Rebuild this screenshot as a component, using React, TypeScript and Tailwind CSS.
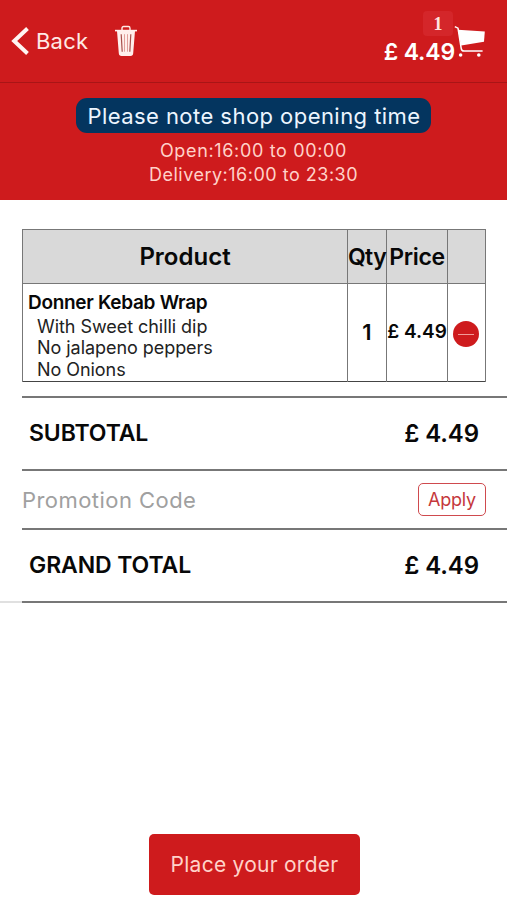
const order = {
  items: [
    {
      name: "Donner Kebab Wrap",
      options: ["With Sweet chilli dip", "No jalapeno peppers", "No Onions"],
      qty: 1,
      price: "£ 4.49",
    },
  ],
  total: "£ 4.49",
};

function BackIcon() {
  return (
    <svg width="18" height="28" viewBox="0 0 18 28" fill="none" stroke="#fff5f2" strokeWidth="4">
      <path d="M16.5 1.5 3.2 14l13.3 12.5" />
    </svg>
  );
}

function TrashIcon() {
  return (
    <svg width="24" height="32" viewBox="0 0 24 32" fill="none">
      <path d="M8 5V3.2Q8 1.5 9.7 1.5h4.6Q16 1.5 16 3.2V5" stroke="#ffe9e5" strokeWidth="1.4" />
      <path d="M1 4.8h22v1.6H1z" fill="#fff1ee" />
      <path d="M3 6h18l-1.8 22.3q-.2 2.7-2.7 2.7h-9q-2.5 0-2.7-2.7z" fill="#ffefec" />
      <path d="m7.2 9.2 1 17.5M16.8 9.2l-1 17.5" stroke="#a8504c" strokeWidth="1.2" />
      <path d="M10.5 9.2v17.5M13.5 9.2v17.5" stroke="#e0a09b" strokeWidth="1" />
    </svg>
  );
}

function CartIcon() {
  return (
    <svg width="32" height="32" viewBox="0 0 32 32" fill="none">
      <path d="M.8 1.6 4 3.2 7.2 23.3Q7.5 26 10 26h18.6" stroke="#fff" strokeWidth="1.5" />
      <path d="M4 4.8 30.8 6.4 30 16.8 7.2 20.6z" fill="#fff" />
      <circle cx="6.6" cy="30" r="1.8" fill="#fff" />
      <circle cx="24.8" cy="30" r="1.8" fill="#fff" />
    </svg>
  );
}

function Header() {
  return (
    <header className="flex h-[83px] shrink-0 items-start justify-between border-b border-[#a91516]">
      <div className="flex items-start pl-[11px] pt-[25px] text-[#ffe9e5]">
        <button className="flex h-8 items-center gap-[7px]">
          <BackIcon />
          <span className="text-[22px] leading-8 tracking-[0.2px]">Back</span>
        </button>
        <button className="ml-[26px]" aria-label="Empty basket">
          <TrashIcon />
        </button>
      </div>
      <div className="flex pr-[21px] pt-[11px] text-white">
        <div className="flex flex-col items-end">
          <span className="mr-px flex h-[25px] w-[30px] items-center justify-center rounded-sm bg-[#d4262a] pt-0.5 font-['Liberation_Serif',serif] text-[18px] font-bold text-[#ffe5e0]">
            1
          </span>
          <span className="-mr-px text-[23px] font-semibold leading-8 tracking-[-0.15px]">{order.total}</span>
        </div>
        <div className="mt-[14px]">
          <CartIcon />
        </div>
      </div>
    </header>
  );
}

function OpeningTimes() {
  return (
    <section className="flex h-[117px] shrink-0 flex-col items-center pt-[15px] text-[#ffd2c9]">
      <h1 className="flex h-[35px] w-[355px] items-center justify-center rounded-[11px] bg-[#04355f] pl-px pt-px text-[22px] tracking-[0.45px] text-[#edf6ff]">
        Please note shop opening time
      </h1>
      <p className="mt-[6px] text-[18px] leading-6 tracking-[0.65px]">Open:16:00 to 00:00</p>
      <p className="text-[18px] leading-6 tracking-[0.5px]">Delivery:16:00 to 23:30</p>
    </section>
  );
}

function BasketTable() {
  return (
    <table className="ml-[22px] mt-[29px] w-[464px] table-fixed border-collapse border border-[#444]">
      <colgroup>
        <col className="w-[325px]" />
        <col className="w-[39px]" />
        <col className="w-[61px]" />
        <col />
      </colgroup>
      <thead>
        <tr className="h-[54px] bg-[#d9d9d9] text-[24px] [&>th]:border [&>th]:border-[#777] [&>th]:p-0 [&>th]:font-semibold">
          <th>Product</th>
          <th><span className="-mx-1 text-[23px] tracking-[-0.6px]">Qty</span></th>
          <th><span className="-mx-1 text-[23px] tracking-[-0.3px]">Price</span></th>
          <th></th>
        </tr>
      </thead>
      <tbody>
        {order.items.map((item) => (
          <tr key={item.name} className="h-[98px] [&>td]:border-x [&>td]:border-[#777] [&>td]:p-0">
            <td>
              <div className="pl-[5px] pt-[5px]">
                <p className="text-[19px] font-semibold leading-[26px] tracking-[-0.3px]">{item.name}</p>
                <ul className="pl-[9px] text-[18px] leading-[21.5px] tracking-[-0.05px] text-[#222]">
                  {item.options.map((option) => (
                    <li key={option}>{option}</li>
                  ))}
                </ul>
              </div>
            </td>
            <td className="text-center text-[22px] font-semibold">{item.qty}</td>
            <td className="text-center text-[19px] font-semibold whitespace-nowrap">{item.price}</td>
            <td>
              <button className="ml-[5px] mt-[3px] flex size-[26px] items-center justify-center rounded-full bg-[#ce1b1d]" aria-label="Remove item">
                <span className="h-px w-4 bg-[#f19b98]"></span>
              </button>
            </td>
          </tr>
        ))}
      </tbody>
    </table>
  );
}

function TotalRow({ label, amount }: { label: string; amount: string }) {
  return (
    <div className="flex h-[73px] items-center justify-between border-b-2 border-[#777] pl-[7px] pr-[28px] text-[23px] font-semibold">
      <span className="tracking-[-0.1px]">{label}</span>
      <span className="text-[24px] tracking-[-0.1px]">{amount}</span>
    </div>
  );
}

export default function App() {
  return (
    <div className="flex h-[900px] w-[507px] flex-col overflow-hidden bg-white font-[Inter,sans-serif] text-[#080808]">
      <div className="bg-[#ce1b1d]">
        <Header />
        <OpeningTimes />
      </div>

      <main className="flex flex-1 flex-col">
        <BasketTable />

        <div className="mt-[14px] flex">
          <div className="w-[22px] border-b-2 border-[#e0e0e0]"></div>
          <div className="flex-1 border-t-2 border-[#777]">
            <TotalRow label="SUBTOTAL" amount={order.total} />
            <div className="flex h-[59px] items-center justify-between border-b-2 border-[#777] pr-[21px]">
              <span className="pt-px text-[22px] tracking-[0.45px] text-[#a0a0a0]">Promotion Code</span>
              <button className="h-[33px] w-[68px] rounded-[5px] border-[1.5px] border-[#cf4a4e] text-[18px] tracking-[-0.2px] text-[#c5383c]">
                Apply
              </button>
            </div>
            <TotalRow label="GRAND TOTAL" amount={order.total} />
          </div>
        </div>

        <button className="mb-[5px] ml-[149px] mt-auto h-[61px] w-[211px] rounded-[5px] bg-[#ce1b1d] text-[21px] tracking-[0.25px] text-[#ffd2c9]">
          Place your order
        </button>
      </main>
    </div>
  );
}
